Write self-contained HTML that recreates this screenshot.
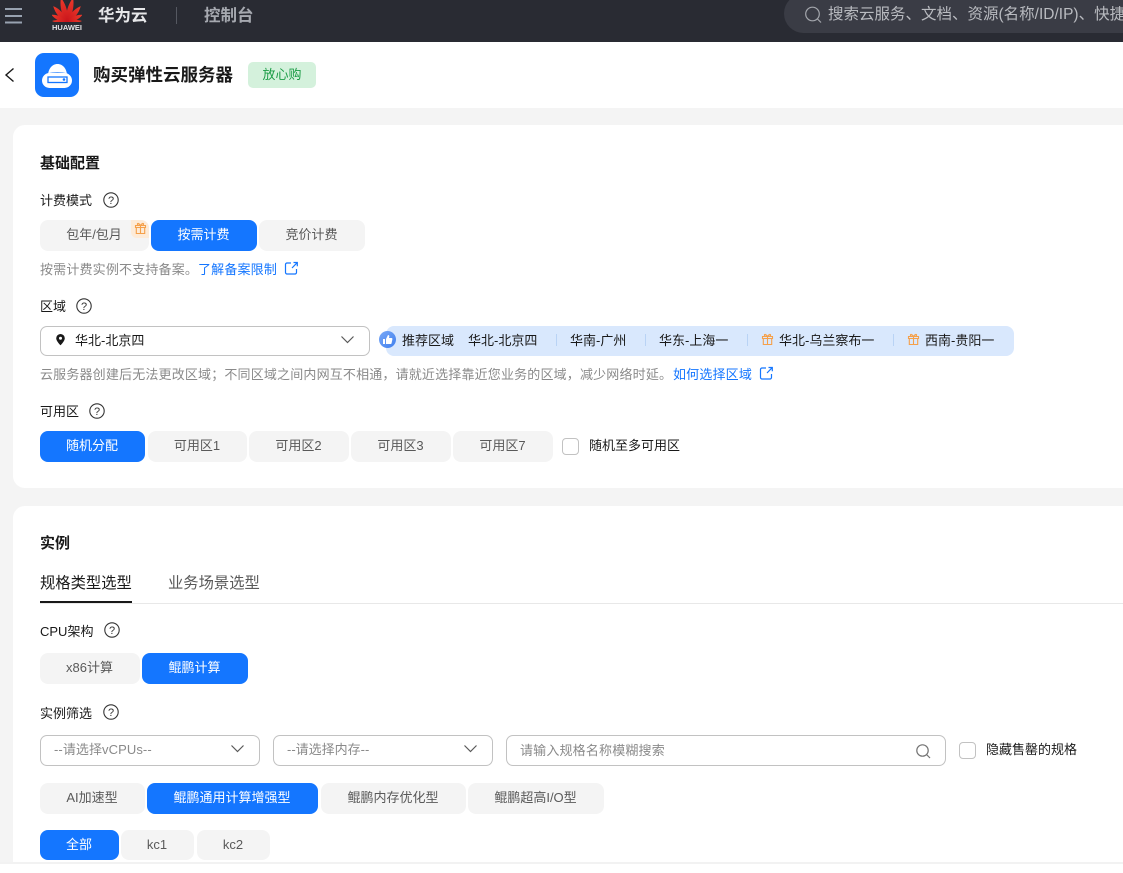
<!DOCTYPE html>
<html lang="zh">
<head>
<meta charset="utf-8">
<title>购买弹性云服务器</title>
<style>
*{box-sizing:border-box}
html,body{margin:0;padding:0}
body{width:1123px;height:873px;overflow:hidden;position:relative;background:#fff;font-family:"Liberation Sans","Noto Sans CJK SC",sans-serif;font-size:13px;color:#191919}
.a{position:absolute}
.t{position:absolute;white-space:nowrap;line-height:18px;margin-top:1px}
.btn{position:absolute;height:31px;border-radius:8px;background:#f4f4f4;color:#595959;text-align:center;line-height:29px;font-size:13px;white-space:nowrap;padding-right:1px}
.on{background:#1476ff;color:#fff}
.sel{position:absolute;height:31px;border:1px solid #c2c2c2;border-radius:7px;background:#fff}
.g{color:#8a8a8a}
.l{color:#1476ff}
.h{letter-spacing:.17px}
svg{position:absolute;display:block;overflow:visible}
.sep{position:absolute;width:1px;height:12px;background:#b9d3f5;top:334px}
</style>
</head>
<body>
<!-- page background -->
<div class="a" style="left:0;top:42px;width:1123px;height:822px;background:#f4f4f4"></div>
<!-- top bar -->
<div class="a" style="left:0;top:0;width:1123px;height:42px;background:#292b33"></div>
<svg style="left:0;top:0" width="30" height="30"><path d="M5 9H22M5 16H22M5 22.500H22" stroke="#98a2b0" stroke-width="2" fill="none"/></svg>
<svg style="left:52px;top:0;overflow:hidden" width="30" height="22" viewBox="-15 -22 30 22">
<defs><linearGradient id="pet" x1="0" y1="0" x2="0" y2="1"><stop offset="0" stop-color="#ee3b2b"/><stop offset="1" stop-color="#c8141b"/></linearGradient></defs>
<g fill="url(#pet)">
<path transform="rotate(-14)" d="M-.3 0C-3.600-7-3.600-17 0-25 3.600-17 3.600-7 .3 0z"/>
<path transform="rotate(14)" d="M-.3 0C-3.600-7-3.600-17 0-25 3.600-17 3.600-7 .3 0z"/>
<path transform="rotate(-41)" d="M-.3 0C-3.400-6-3.400-14 0-21 3.400-14 3.400-6 .3 0z"/>
<path transform="rotate(41)" d="M-.3 0C-3.400-6-3.400-14 0-21 3.400-14 3.400-6 .3 0z"/>
<path transform="rotate(-65)" d="M-.3 0C-2.800-5-2.800-12 0-17 2.800-12 2.800-5 .3 0z"/>
<path transform="rotate(65)" d="M-.3 0C-2.800-5-2.800-12 0-17 2.800-12 2.800-5 .3 0z"/>
<path transform="rotate(-86)" d="M-.3 0C-1.900-4-1.900-10 0-15 1.900-10 1.900-4 .3 0z"/>
<path transform="rotate(86)" d="M-.3 0C-1.900-4-1.900-10 0-15 1.900-10 1.900-4 .3 0z"/>
</g>
</svg>
<div class="t" style="left:52px;top:22px;font-size:7.500px;line-height:10px;color:#e4e5e7;font-weight:bold;width:30px;text-align:center">HUAWEI</div>
<div class="t" style="left:98px;top:5px;font-size:16.500px;line-height:20px;font-weight:bold;color:#e6e7e9">华为云</div>
<div class="a" style="left:176px;top:7px;width:1px;height:17px;background:#555861"></div>
<div class="t" style="left:204px;top:5px;font-size:16.500px;line-height:20px;font-weight:bold;color:#a6a9b0">控制台</div>
<div class="a" style="left:784px;top:-6px;width:360px;height:39px;border-radius:20px;background:#3a3c45"></div>
<svg style="left:804px;top:6px" width="20" height="20"><circle cx="8.500" cy="8" r="6.800" stroke="#a3a6ac" stroke-width="1.200" fill="none"/><path d="M13.500 13l3.500 3.500" stroke="#a3a6ac" stroke-width="1.200"/></svg>
<div class="t" style="left:828px;top:5px;font-size:15.500px;line-height:18px;color:#b9bbc0">搜索云服务、文档、资源(名称/ID/IP)、快捷</div>

<!-- header -->
<div class="a" style="left:0;top:42px;width:1123px;height:66px;background:#fff"></div>
<svg style="left:4px;top:67px" width="12" height="16"><path d="M9.500 1.500L2 8l7.500 6.500" stroke="#191919" stroke-width="1.400" fill="none"/></svg>
<div class="a" style="left:35px;top:53px;width:44px;height:44px;border-radius:9px;background:#1476ff"></div>
<svg style="left:35px;top:53px" width="44" height="44" viewBox="0 0 44 44">
<path d="M13 23c0-7 4-12 9.500-12S32 16 32 23z" fill="#fff"/>
<path d="M14.500 20.500C17 19.500 28 19.500 30.500 20.500" stroke="#1476ff" stroke-width="1" fill="none" opacity=".9"/>
<rect x="7" y="20" width="30" height="15" rx="7.500" fill="#fff"/>
<rect x="13" y="24" width="19" height="5.500" fill="#fff" stroke="#1476ff" stroke-width="1.300"/>
<circle cx="29" cy="26.500" r="1.300" fill="#1476ff"/>
</svg>
<div class="t" style="left:93px;top:63px;font-size:17.500px;line-height:22px;font-weight:bold;color:#191919">购买弹性云服务器</div>
<div class="a" style="left:248px;top:62px;width:68px;height:26px;border-radius:5px;background:#d4f1dc;color:#1a9c45;text-align:center;line-height:25px;font-size:13px">放心购</div>

<!-- card 1 -->
<div class="a" style="left:13px;top:125px;width:1130px;height:363px;border-radius:12px;background:#fff"></div>
<div class="t" style="left:40px;top:154px;font-size:15px;font-weight:bold">基础配置</div>

<div class="t" style="left:40px;top:191px">计费模式</div>
<svg style="left:103px;top:192px" width="16" height="16"><circle cx="8" cy="8" r="7.200" stroke="#333" stroke-width="1.100" fill="none"/><text x="8" y="12" font-size="11" text-anchor="middle" fill="#333" font-family="Liberation Sans">?</text></svg>
<div class="btn" style="left:40px;top:220px;width:109px">包年/包月</div>
<div class="a" style="left:131px;top:220px;width:18px;height:18px;background:#fdebd8;border-radius:0 8px 0 6px"></div>
<svg style="left:134px;top:222px" width="13" height="13"><path d="M1.500 3.500h10v2h-10zM2.300 5.500v6h8.400v-6M6.500 3.500v8M6.500 3.500C5 1 3 .8 3.500 2.500c.2.700 1.500 1 3 1zM6.500 3.500C8 1 10 .8 9.500 2.500c-.2.700-1.500 1-3 1z" stroke="#f5a04a" stroke-width="1.100" fill="none"/></svg>
<div class="btn on" style="left:151px;top:220px;width:106px">按需计费</div>
<div class="btn" style="left:259px;top:220px;width:106px">竞价计费</div>
<div class="t g h" style="left:40px;top:260px">按需计费实例不支持备案。</div>
<div class="t l h" style="left:198px;top:260px">了解备案限制</div>
<svg style="left:284px;top:261px" width="15" height="15"><path d="M7 2H3a1.500 1.500 0 0 0-1.500 1.500v8A1.500 1.500 0 0 0 3 13h8a1.500 1.500 0 0 0 1.500-1.500V8M8 7l5-5.200M9.500 1.500h3.800v3.800" stroke="#1476ff" stroke-width="1.200" fill="none"/></svg>

<div class="t" style="left:40px;top:297px">区域</div>
<svg style="left:76px;top:298px" width="16" height="16"><circle cx="8" cy="8" r="7.200" stroke="#333" stroke-width="1.100" fill="none"/><text x="8" y="12" font-size="11" text-anchor="middle" fill="#333" font-family="Liberation Sans">?</text></svg>
<div class="sel" style="left:40px;top:326px;width:330px;height:30px"></div>
<svg style="left:55px;top:333px" width="12" height="14"><path fill-rule="evenodd" d="M5.500 1a4.300 4.300 0 0 1 4.300 4.300c0 3-4.300 7-4.300 7s-4.300-4-4.300-7A4.300 4.300 0 0 1 5.500 1zm0 2.800a1.500 1.500 0 1 0 0 3 1.500 1.500 0 0 0 0-3z" fill="#191919"/></svg>
<div class="t" style="left:75px;top:331px">华北-北京四</div>
<svg style="left:340px;top:335px" width="15" height="10"><path d="M1.500 1.500L7.500 7.500 13.500 1.500" stroke="#595959" stroke-width="1.200" fill="none"/></svg>

<div class="a" style="left:386px;top:326px;width:628px;height:30px;border-radius:8px;background:#d9e8fd"></div>
<svg style="left:379px;top:331px" width="18" height="18"><defs><linearGradient id="gr" x1="0" y1="0" x2="1" y2="1"><stop offset="0" stop-color="#7aa9f7"/><stop offset="1" stop-color="#3f7fee"/></linearGradient></defs><circle cx="8.500" cy="8.500" r="8.500" fill="url(#gr)"/><path d="M4 8h2v5H4zM7 8l2-4c1 0 1.500.7 1.300 1.800L10 7h2.500c.6 0 1 .5.900 1.100l-.8 4c-.1.500-.5.900-1 .9H7z" fill="#fff"/></svg>
<div class="t" style="left:402px;top:331px">推荐区域</div>
<div class="t" style="left:468px;top:331px">华北-北京四</div>
<div class="sep" style="left:556px"></div>
<div class="t" style="left:570px;top:331px">华南-广州</div>
<div class="sep" style="left:645px"></div>
<div class="t" style="left:659px;top:331px">华东-上海一</div>
<div class="sep" style="left:747px"></div>
<svg style="left:761px;top:333px" width="13" height="13"><path d="M1.500 3.500h10v2h-10zM2.300 5.500v6h8.400v-6M6.500 3.500v8M6.500 3.500C5 1 3 .8 3.500 2.500c.2.700 1.500 1 3 1zM6.500 3.500C8 1 10 .8 9.500 2.500c-.2.700-1.500 1-3 1z" stroke="#f5a04a" stroke-width="1.100" fill="none"/></svg>
<div class="t" style="left:779px;top:331px">华北-乌兰察布一</div>
<div class="sep" style="left:893px"></div>
<svg style="left:907px;top:333px" width="13" height="13"><path d="M1.500 3.500h10v2h-10zM2.300 5.500v6h8.400v-6M6.500 3.500v8M6.500 3.500C5 1 3 .8 3.500 2.500c.2.700 1.500 1 3 1zM6.500 3.500C8 1 10 .8 9.500 2.500c-.2.700-1.500 1-3 1z" stroke="#f5a04a" stroke-width="1.100" fill="none"/></svg>
<div class="t" style="left:925px;top:331px">西南-贵阳一</div>

<div class="t g h" style="left:40px;top:365px">云服务器创建后无法更改区域；不同区域之间内网互不相通，请就近选择靠近您业务的区域，减少网络时延。</div>
<div class="t l h" style="left:673px;top:365px">如何选择区域</div>
<svg style="left:759px;top:366px" width="15" height="15"><path d="M7 2H3a1.500 1.500 0 0 0-1.500 1.500v8A1.500 1.500 0 0 0 3 13h8a1.500 1.500 0 0 0 1.500-1.500V8M8 7l5-5.200M9.500 1.500h3.800v3.800" stroke="#1476ff" stroke-width="1.200" fill="none"/></svg>

<div class="t" style="left:40px;top:402px">可用区</div>
<svg style="left:89px;top:403px" width="16" height="16"><circle cx="8" cy="8" r="7.200" stroke="#333" stroke-width="1.100" fill="none"/><text x="8" y="12" font-size="11" text-anchor="middle" fill="#333" font-family="Liberation Sans">?</text></svg>
<div class="btn on" style="left:40px;top:431px;width:105px">随机分配</div>
<div class="btn" style="left:148px;top:431px;width:99px">可用区1</div>
<div class="btn" style="left:249px;top:431px;width:100px">可用区2</div>
<div class="btn" style="left:351px;top:431px;width:100px">可用区3</div>
<div class="btn" style="left:453px;top:431px;width:100px">可用区7</div>
<div class="a" style="left:562px;top:438px;width:17px;height:17px;border:1px solid #c2c2c2;border-radius:4px;background:#fff"></div>
<div class="t" style="left:589px;top:436px">随机至多可用区</div>

<!-- card 2 -->
<div class="a" style="left:13px;top:506px;width:1130px;height:358px;border-radius:12px 0 0 0;background:#fff"></div>
<div class="t" style="left:40px;top:534px;font-size:15px;font-weight:bold">实例</div>
<div class="t" style="left:40px;top:573px;font-size:15.300px;line-height:20px">规格类型选型</div>
<div class="t" style="left:168px;top:573px;font-size:15.300px;line-height:20px;color:#595959">业务场景选型</div>
<div class="a" style="left:40px;top:603px;width:1083px;height:1px;background:#e8e8e8"></div>
<div class="a" style="left:40px;top:601px;width:92px;height:2px;background:#191919"></div>

<div class="t" style="left:40px;top:622px">CPU架构</div>
<svg style="left:104px;top:622px" width="16" height="16"><circle cx="8" cy="8" r="7.200" stroke="#333" stroke-width="1.100" fill="none"/><text x="8" y="12" font-size="11" text-anchor="middle" fill="#333" font-family="Liberation Sans">?</text></svg>
<div class="btn" style="left:40px;top:653px;width:100px">x86计算</div>
<div class="btn on" style="left:142px;top:653px;width:106px">鲲鹏计算</div>

<div class="t" style="left:40px;top:704px">实例筛选</div>
<svg style="left:103px;top:704px" width="16" height="16"><circle cx="8" cy="8" r="7.200" stroke="#333" stroke-width="1.100" fill="none"/><text x="8" y="12" font-size="11" text-anchor="middle" fill="#333" font-family="Liberation Sans">?</text></svg>

<div class="sel" style="left:40px;top:735px;width:220px"></div>
<div class="t g" style="left:54px;top:740px;letter-spacing:.08px">--请选择vCPUs--</div>
<svg style="left:230px;top:744px" width="15" height="10"><path d="M1.500 1.500L7.500 7.500 13.500 1.500" stroke="#595959" stroke-width="1.200" fill="none"/></svg>
<div class="sel" style="left:273px;top:735px;width:220px"></div>
<div class="t g" style="left:287px;top:740px">--请选择内存--</div>
<svg style="left:463px;top:744px" width="15" height="10"><path d="M1.500 1.500L7.500 7.500 13.500 1.500" stroke="#595959" stroke-width="1.200" fill="none"/></svg>
<div class="sel" style="left:506px;top:735px;width:440px"></div>
<div class="t g h" style="left:520px;top:741px">请输入规格名称模糊搜索</div>
<svg style="left:915px;top:743px" width="17" height="17"><circle cx="7.500" cy="7.500" r="5.700" stroke="#737373" stroke-width="1.200" fill="none"/><path d="M11.500 11.500l3.500 3.500" stroke="#737373" stroke-width="1.200"/></svg>
<div class="a" style="left:959px;top:742px;width:17px;height:17px;border:1px solid #c2c2c2;border-radius:4px;background:#fff"></div>
<div class="t" style="left:986px;top:740px">隐藏售罄的规格</div>

<div class="btn" style="left:40px;top:783px;width:105px">AI加速型</div>
<div class="btn on" style="left:147px;top:783px;width:171px">鲲鹏通用计算增强型</div>
<div class="btn" style="left:321px;top:783px;width:145px">鲲鹏内存优化型</div>
<div class="btn" style="left:468px;top:783px;width:136px">鲲鹏超高I/O型</div>

<div class="btn on" style="left:40px;top:830px;width:79px;height:30px">全部</div>
<div class="btn" style="left:121px;top:830px;width:73px;height:30px">kc1</div>
<div class="btn" style="left:197px;top:830px;width:73px;height:30px">kc2</div>

<!-- bottom strip -->
<div class="a" style="left:0;top:862px;width:1123px;height:2px;background:#f2f2f2"></div>
<div class="a" style="left:0;top:864px;width:1123px;height:9px;background:#fff"></div>
</body>
</html>
